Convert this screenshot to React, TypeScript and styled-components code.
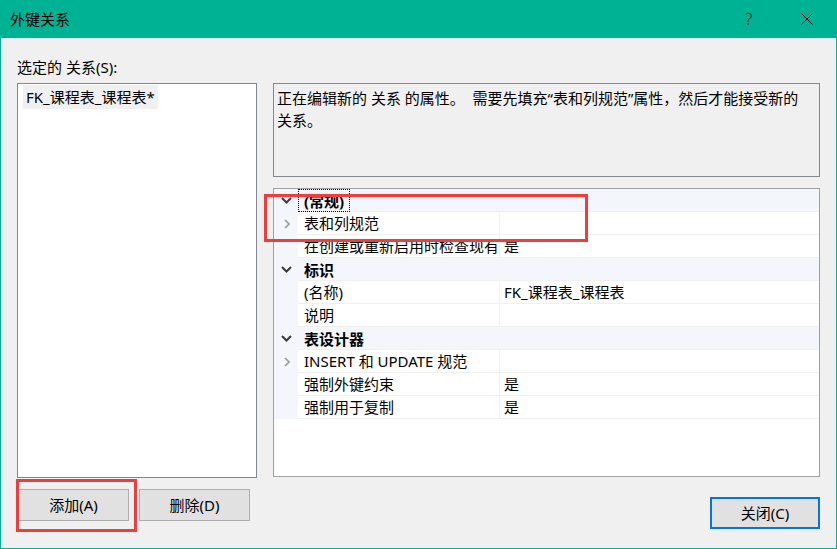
import React from 'react';
import styled, { createGlobalStyle } from 'styled-components';

const Global = createGlobalStyle`
  html, body { margin: 0; padding: 0; background: #f0f0f0; }
  body { font-family: "Noto Sans", "Noto Sans CJK SC", sans-serif; }
  * { box-sizing: border-box; }
`;

const FONT = `"Noto Sans", "Noto Sans CJK SC", sans-serif`;

const Window = styled.div`
  position: relative;
  width: 837px;
  height: 549px;
  border: 1px solid #00b294;
  border-top: none;
  background: #f0f0f0;
  display: flex;
  flex-direction: column;
  font-family: ${FONT};
  font-size: 15px;
  color: #000;
`;

const TitleBar = styled.div`
  height: 38px;
  flex: none;
  background: #00b294;
  display: flex;
  align-items: center;
`;

const Title = styled.div`
  flex: 1;
  padding-left: 9px;
  line-height: 20px;
`;

const CaptionButton = styled.div`
  width: 58px;
  height: 38px;
  display: flex;
  align-items: center;
  justify-content: center;
  font-size: 16px;
  font-weight: 300;
`;

const Body = styled.div`
  flex: 1;
  display: grid;
  grid-template-columns: 240px 547px;
  grid-template-rows: 45px 395px auto;
  column-gap: 16px;
  padding-left: 16px;
`;

const Label = styled.div`
  grid-column: 1;
  grid-row: 1;
  align-self: end;
  line-height: 22px;
  padding-bottom: 5px;
`;

const ListBox = styled.div`
  grid-column: 1;
  grid-row: 2;
  background: #fff;
  border: 1px solid #828790;
  padding: 1px 0 0 5px;
`;

const ListItem = styled.div`
  display: inline-block;
  height: 24px;
  line-height: 24px;
  padding: 0 3px;
  background: #f0f0f0;
`;

const RightStack = styled.div`
  grid-column: 2;
  grid-row: 2;
  display: flex;
  flex-direction: column;
  gap: 11px;
`;

const Description = styled.div`
  height: 94px;
  flex: none;
  background: #f0f0f0;
  border: 1px solid #828790;
  padding: 3px 3px;
  line-height: 22px;
`;

const PropGrid = styled.div`
  height: 289px;
  flex: none;
  background: #fff;
  border: 1px solid #a0a0a0;
  display: flex;
  flex-direction: column;
  overflow: hidden;
`;

const Row = styled.div<{ $category?: boolean }>`
  display: grid;
  grid-template-columns: 24px 202px 1fr;
  height: 23px;
  flex: none;
  background: ${p => (p.$category ? '#f3f6fb' : '#fff')};
`;

const Gutter = styled.div`
  background: #f3f6fb;
  display: flex;
  align-items: center;
  justify-content: center;
  padding-left: 1px;
`;

const CatLabel = styled.div`
  grid-column: 2 / span 2;
  font-weight: bold;
  line-height: 21px;
  height: 23px;
  border-bottom: 1px solid #f0f0f0;
  padding-left: 6px;
  display: flex;
`;

const FocusText = styled.span<{ $focus?: boolean }>`
  display: inline-block;
  margin-left: -6px;
  padding: 0 5px;
  height: 23px;
  line-height: 22px;
  border: 1px dotted ${p => (p.$focus ? '#000' : 'transparent')};
`;

const NameCell = styled.div`
  border-right: 1px solid #f0f0f0;
  border-bottom: 1px solid #f0f0f0;
  padding-left: 6px;
  line-height: 22px;
  white-space: nowrap;
  overflow: hidden;
`;

const ValueCell = styled.div`
  border-bottom: 1px solid #f0f0f0;
  padding-left: 4px;
  line-height: 22px;
  white-space: nowrap;
  overflow: hidden;
`;

const LeftButtons = styled.div`
  grid-column: 1;
  grid-row: 3;
  display: flex;
  gap: 10px;
  padding-left: 1px;
  margin-top: 11px;
  align-self: start;
`;

const Button = styled.div<{ $default?: boolean }>`
  width: ${p => (p.$default ? '110px' : '111px')};
  height: 32px;
  background: #e1e1e1;
  border: ${p => (p.$default ? '2px solid #0078d7' : '1px solid #adadad')};
  display: flex;
  align-items: center;
  justify-content: center;
  line-height: 20px;
`;

const RightButtons = styled.div`
  grid-column: 2;
  grid-row: 3;
  display: flex;
  justify-content: flex-end;
  margin-top: 19px;
  align-self: start;
`;

const Highlight = styled.div<{ $x: number; $y: number; $w: number; $h: number }>`
  position: absolute;
  left: ${p => p.$x - 1}px;
  top: ${p => p.$y}px;
  width: ${p => p.$w}px;
  height: ${p => p.$h}px;
  border: 3px solid #f23b3b;
  pointer-events: none;
`;

const ChevronDown = () => (
  <svg width="11" height="7" viewBox="0 0 11 7">
    <path d="M1 1 L5.5 5.5 L10 1" fill="none" stroke="#3a3a3a" strokeWidth="2" />
  </svg>
);

const ChevronRight = () => (
  <svg width="6" height="10" viewBox="0 0 6 10">
    <path d="M1 1 L5 5 L1 9" fill="none" stroke="#9a9a9a" strokeWidth="1.6" />
  </svg>
);

type Item =
  | { kind: 'cat'; label: string; focus?: boolean }
  | { kind: 'prop'; name: string; value?: string; expandable?: boolean };

const items: Item[] = [
  { kind: 'cat', label: '(常规)', focus: true },
  { kind: 'prop', name: '表和列规范', expandable: true },
  { kind: 'prop', name: '在创建或重新启用时检查现有', value: '是' },
  { kind: 'cat', label: '标识' },
  { kind: 'prop', name: '(名称)', value: 'FK_课程表_课程表' },
  { kind: 'prop', name: '说明' },
  { kind: 'cat', label: '表设计器' },
  { kind: 'prop', name: 'INSERT 和 UPDATE 规范', expandable: true },
  { kind: 'prop', name: '强制外键约束', value: '是' },
  { kind: 'prop', name: '强制用于复制', value: '是' },
];

export default function App() {
  return (
    <>
      <Global />
      <Window>
        <TitleBar>
          <Title>外键关系</Title>
          <CaptionButton>?</CaptionButton>
          <CaptionButton>
            <svg width="12" height="12" viewBox="0 0 12 12">
              <path d="M0.5 0.5 L11.5 11.5 M11.5 0.5 L0.5 11.5" stroke="#000" strokeWidth="1" />
            </svg>
          </CaptionButton>
        </TitleBar>
        <Body>
          <Label>选定的 关系(S):</Label>
          <ListBox>
            <ListItem>FK_课程表_课程表*</ListItem>
          </ListBox>
          <RightStack>
            <Description>
              {'正在编辑新的 关系 的属性。\u00a0 需要先填充“表和列规范”属性，然后才能接受新的'}
              <br />
              关系。
            </Description>
            <PropGrid>
              {items.map((it, i) =>
                it.kind === 'cat' ? (
                  <Row key={i} $category>
                    <Gutter>
                      <ChevronDown />
                    </Gutter>
                    <CatLabel>
                      <FocusText $focus={it.focus}>{it.label}</FocusText>
                    </CatLabel>
                  </Row>
                ) : (
                  <Row key={i}>
                    <Gutter>{it.expandable ? <ChevronRight /> : null}</Gutter>
                    <NameCell>{it.name}</NameCell>
                    <ValueCell>{it.value ?? ''}</ValueCell>
                  </Row>
                )
              )}
            </PropGrid>
          </RightStack>
          <LeftButtons>
            <Button>添加(A)</Button>
            <Button>删除(D)</Button>
          </LeftButtons>
          <RightButtons>
            <Button $default>关闭(C)</Button>
          </RightButtons>
        </Body>
        <Highlight $x={264} $y={194} $w={324} $h={48} />
        <Highlight $x={16} $y={479} $w={121} $h={53} />
      </Window>
    </>
  );
}
